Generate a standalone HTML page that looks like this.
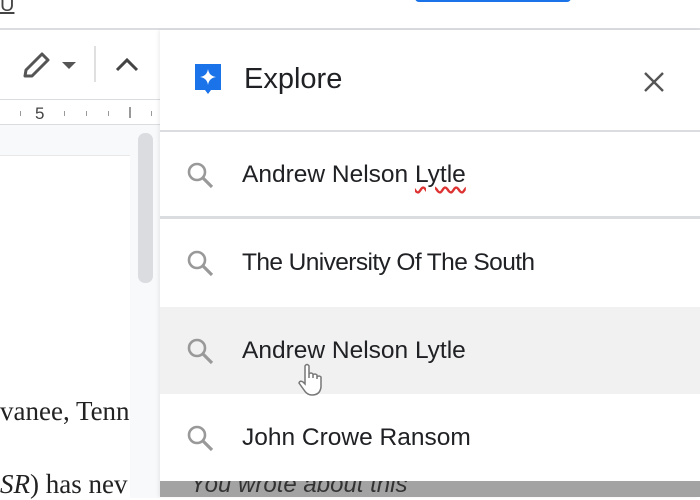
<!DOCTYPE html>
<html><head><style>
body{margin:0;width:700px;height:497px;overflow:hidden;position:relative;background:#fff;font-family:"Liberation Sans",Roboto,sans-serif}
.a{position:absolute}
.item{position:absolute;left:160px;width:540px;height:87px;font-size:24.5px;color:#202124}
.item span{position:absolute;left:82px;top:30px}
.item svg{position:absolute;left:26px;top:30px}
</style></head><body>
<div class="a" style="left:0;top:-6px;font-size:20px;color:#444;text-decoration:underline">U</div>
<div class="a" style="left:415px;top:-6px;width:156px;height:8px;background:#1a73e8;border-radius:4px"></div>
<div class="a" style="left:0;top:28px;width:700px;height:2px;background:#dadce0"></div>
<svg class="a" style="left:20px;top:48px" width="34" height="32" viewBox="0 0 34 32"><path d="M5 28 L6 22 L22 6 L28 12 L12 28 Z" fill="none" stroke="#555" stroke-width="3" stroke-linejoin="round"/></svg>
<svg class="a" style="left:62px;top:62px" width="14" height="8"><path d="M0 0 L14 0 L7 7 Z" fill="#555"/></svg>
<div class="a" style="left:94px;top:46px;width:2px;height:36px;background:#e0e0e0"></div>
<svg class="a" style="left:115px;top:56px" width="24" height="16"><path d="M2 14 L12 4 L22 14" fill="none" stroke="#444" stroke-width="3"/></svg>
<div class="a" style="left:0;top:99px;width:160px;height:1px;background:#dadce0"></div>
<div class="a" style="left:35px;top:104px;font-size:17px;color:#444">5</div>
<div class="a" style="left:20px;top:111px;width:1px;height:5px;background:#999"></div>
<div class="a" style="left:64px;top:111px;width:1px;height:5px;background:#999"></div>
<div class="a" style="left:86px;top:111px;width:1px;height:5px;background:#999"></div>
<div class="a" style="left:108px;top:111px;width:1px;height:5px;background:#999"></div>
<div class="a" style="left:129px;top:107px;width:2px;height:11px;background:#999"></div>
<div class="a" style="left:151px;top:111px;width:1px;height:5px;background:#999"></div>
<div class="a" style="left:0;top:124px;width:160px;height:373px;background:#f8f9fa;border-top:1px solid #dadce0"></div>
<div class="a" style="left:0;top:155px;width:130px;height:342px;background:#fff;border-top:1px solid #e8e8e8"></div>
<div class="a" style="left:138px;top:133px;width:15px;height:150px;background:#dadce0;border-radius:7px"></div>
<div class="a" style="left:0;top:396px;font-family:'Liberation Serif',serif;font-size:27px;color:#222;white-space:nowrap;width:131px;overflow:hidden">vanee, Tenn</div>
<div class="a" style="left:0;top:469px;font-family:'Liberation Serif',serif;font-size:27px;color:#222;white-space:nowrap;width:131px;overflow:hidden"><i>SR</i>) has nev</div>
<div class="a" style="left:160px;top:30px;width:540px;height:467px;background:#fff;box-shadow:-2px 0 3px rgba(0,0,0,.06)"></div>
<svg class="a" style="left:193px;top:62px" width="30" height="34" viewBox="0 0 30 34"><path d="M2 2 H28 V28 H18 L15 32 L12 28 H2 Z" fill="#1a73e8"/><path d="M15 7 Q16 14 23 15 Q16 16 15 23 Q14 16 7 15 Q14 14 15 7Z" fill="#fff"/></svg>
<div class="a" style="left:244px;top:63px;font-size:29px;color:#202124">Explore</div>
<svg class="a" style="left:643px;top:71px" width="22" height="22"><path d="M2 2 L20 20 M20 2 L2 20" stroke="#555" stroke-width="2.4"/></svg>
<div class="a" style="left:160px;top:130px;width:540px;height:2px;background:#dadce0"></div>
<div class="a" style="left:160px;top:216px;width:540px;height:3px;background:#dadce0"></div>
<div class="item" style="top:131px"><svg width="30" height="30" viewBox="0 0 30 30"><circle cx="11" cy="11" r="8" fill="none" stroke="#999" stroke-width="2.6"/><path d="M17 17 L26 26" stroke="#999" stroke-width="3.2"/></svg><span>Andrew Nelson <u style="text-decoration:underline wavy #d33;text-underline-offset:4px">Lytle</u></span></div>
<div class="item" style="top:219px"><svg width="30" height="30" viewBox="0 0 30 30"><circle cx="11" cy="11" r="8" fill="none" stroke="#999" stroke-width="2.6"/><path d="M17 17 L26 26" stroke="#999" stroke-width="3.2"/></svg><span style="letter-spacing:-0.6px">The University Of The South</span></div>
<div class="item" style="top:307px;background:#f1f1f1"><svg width="30" height="30" viewBox="0 0 30 30"><circle cx="11" cy="11" r="8" fill="none" stroke="#999" stroke-width="2.6"/><path d="M17 17 L26 26" stroke="#999" stroke-width="3.2"/></svg><span>Andrew Nelson Lytle</span></div>
<div class="item" style="top:394px"><svg width="30" height="30" viewBox="0 0 30 30"><circle cx="11" cy="11" r="8" fill="none" stroke="#999" stroke-width="2.6"/><path d="M17 17 L26 26" stroke="#999" stroke-width="3.2"/></svg><span>John Crowe Ransom</span></div>
<svg class="a" style="left:297px;top:362px" width="28" height="36" viewBox="0 0 28 36"><path d="M8 22 V4 Q10 1 12 4 V16 V12 Q14 10 16 12 V16 V13 Q18 11 20 13 V17 V15 Q22 13 24 15 V25 Q23 33 15 33 Q10 33 7 28 L2 21 Q3 18 6 20 Z" fill="#fff" stroke="#777" stroke-width="1.5"/></svg>
<div class="a" style="left:160px;top:481px;width:540px;height:16px;background:#a3a3a3;overflow:hidden"><div style="position:absolute;left:30px;top:-10px;font-size:24px;font-style:italic;color:#333">You wrote about this</div></div>
</body></html>
